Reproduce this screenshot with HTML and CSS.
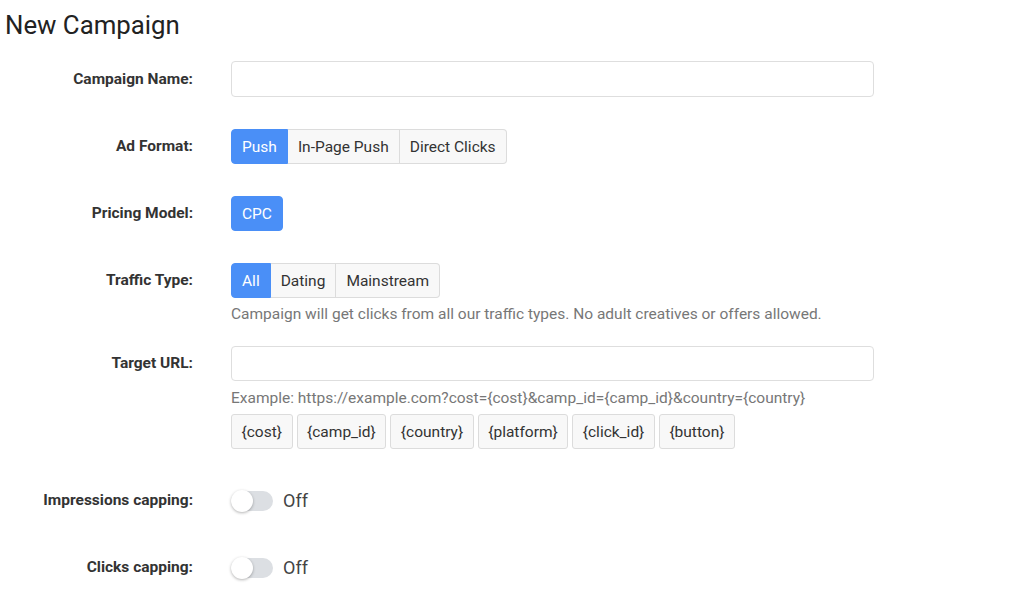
FILE: index.html
```
<!DOCTYPE html>
<html lang="en">
<head>
<meta charset="utf-8">
<title>New Campaign</title>
<link rel="stylesheet" href="styles.css">
</head>
<body>
<div class="page">
  <h1 class="title">New Campaign</h1>
  <form class="form">
    <div class="row">
      <label class="label">Campaign Name:</label>
      <div class="control">
        <input class="input input-lg" type="text">
      </div>
    </div>
    <div class="row">
      <label class="label">Ad Format:</label>
      <div class="control">
        <div class="btn-group">
          <button type="button" class="btn active">Push</button>
          <button type="button" class="btn">In-Page Push</button>
          <button type="button" class="btn">Direct Clicks</button>
        </div>
      </div>
    </div>
    <div class="row">
      <label class="label">Pricing Model:</label>
      <div class="control">
        <div class="btn-group">
          <button type="button" class="btn active">CPC</button>
        </div>
      </div>
    </div>
    <div class="row row-help">
      <label class="label">Traffic Type:</label>
      <div class="control">
        <div class="btn-group">
          <button type="button" class="btn active btn-narrow">All</button>
          <button type="button" class="btn btn-narrow">Dating</button>
          <button type="button" class="btn btn-narrow">Mainstream</button>
        </div>
        <p class="help">Campaign will get clicks from all our traffic types. No adult creatives or offers allowed.</p>
      </div>
    </div>
    <div class="row row-url">
      <label class="label">Target URL:</label>
      <div class="control">
        <input class="input" type="text">
        <p class="help help-example">Example: https://example.com?cost={cost}&amp;camp_id={camp_id}&amp;country={country}</p>
        <div class="tags">
          <button type="button" class="tag">{cost}</button>
          <button type="button" class="tag">{camp_id}</button>
          <button type="button" class="tag">{country}</button>
          <button type="button" class="tag">{platform}</button>
          <button type="button" class="tag">{click_id}</button>
          <button type="button" class="tag">{button}</button>
        </div>
      </div>
    </div>
    <div class="row row-switch">
      <label class="label">Impressions capping:</label>
      <div class="control switch-line">
        <span class="switch"><span class="knob"></span></span>
        <span class="switch-text">Off</span>
      </div>
    </div>
    <div class="row row-switch">
      <label class="label">Clicks capping:</label>
      <div class="control switch-line">
        <span class="switch"><span class="knob"></span></span>
        <span class="switch-text">Off</span>
      </div>
    </div>
  </form>
</div>
</body>
</html>
```
FILE: styles.css
```
* {
  box-sizing: border-box;
}

html, body {
  margin: 0;
  background: #fff;
}

body {
  font-family: Roboto, "Liberation Sans", Arial, sans-serif;
  color: #333;
}

.page {
  padding: 8px 0 0 5px;
}

.title {
  margin: 0 0 19px;
  font-size: 25.8px;
  line-height: 34px;
  font-weight: 400;
  color: #222;
}

.form {
  display: flex;
  flex-direction: column;
  gap: 32px;
}

.row {
  display: grid;
  grid-template-columns: 188px 643px;
  column-gap: 38px;
  align-items: start;
}

.row-url {
  margin-top: -10px;
}

.row-switch {
  margin-top: 2px;
}

.row-switch + .row-switch {
  margin-top: 0;
}

.label {
  text-align: right;
  font-size: 15.5px;
  font-weight: 700;
  line-height: 35px;
  color: #333;
}

.row:first-child .label {
  line-height: 36px;
}

.control {
  min-width: 0;
}

.input {
  display: block;
  width: 643px;
  height: 35px;
  border: 1px solid #dedede;
  border-radius: 4px;
  background: #fff;
  font: inherit;
  padding: 0 10px;
}

.input-lg {
  height: 36px;
}

.btn-group {
  display: inline-flex;
  border-radius: 4px;
}

.btn {
  height: 35px;
  padding: 0 10px;
  font-family: inherit;
  font-size: 15.5px;
  color: #333;
  background: #f8f8f8;
  border: 1px solid #dcdcdc;
  border-left-width: 0;
  margin: 0;
}

.btn:first-child {
  border-left-width: 1px;
  border-radius: 4px 0 0 4px;
}

.btn:last-child {
  border-radius: 0 4px 4px 0;
}

.btn:only-child {
  border-radius: 4px;
}

.btn.active {
  background: #4a8ff7;
  border-color: #4a8ff7;
  color: #fff;
}

.btn-narrow {
  padding: 0 10px;
}

.help {
  margin: 6px 0 0;
  font-size: 15.5px;
  line-height: 20px;
  color: #777;
}

.help-example {
  margin-top: 7px;
}

.tags {
  display: flex;
  gap: 4px;
  margin-top: 6px;
}

.tag {
  height: 35px;
  padding: 0 9.5px;
  font-family: inherit;
  font-size: 15.5px;
  color: #333;
  background: #f8f8f8;
  border: 1px solid #dcdcdc;
  border-radius: 3px;
  margin: 0;
}

.switch-line {
  display: flex;
  align-items: center;
  height: 35px;
  gap: 10px;
}

.switch {
  position: relative;
  width: 42px;
  height: 20px;
  border-radius: 10px;
  background: #dcdfe3;
}

.knob {
  position: absolute;
  left: 0;
  top: -1px;
  width: 22px;
  height: 22px;
  border-radius: 50%;
  background: #fff;
  box-shadow: 0 1px 3px rgba(0, 0, 0, 0.3);
}

.switch-text {
  font-size: 18px;
  color: #444;
}
```
